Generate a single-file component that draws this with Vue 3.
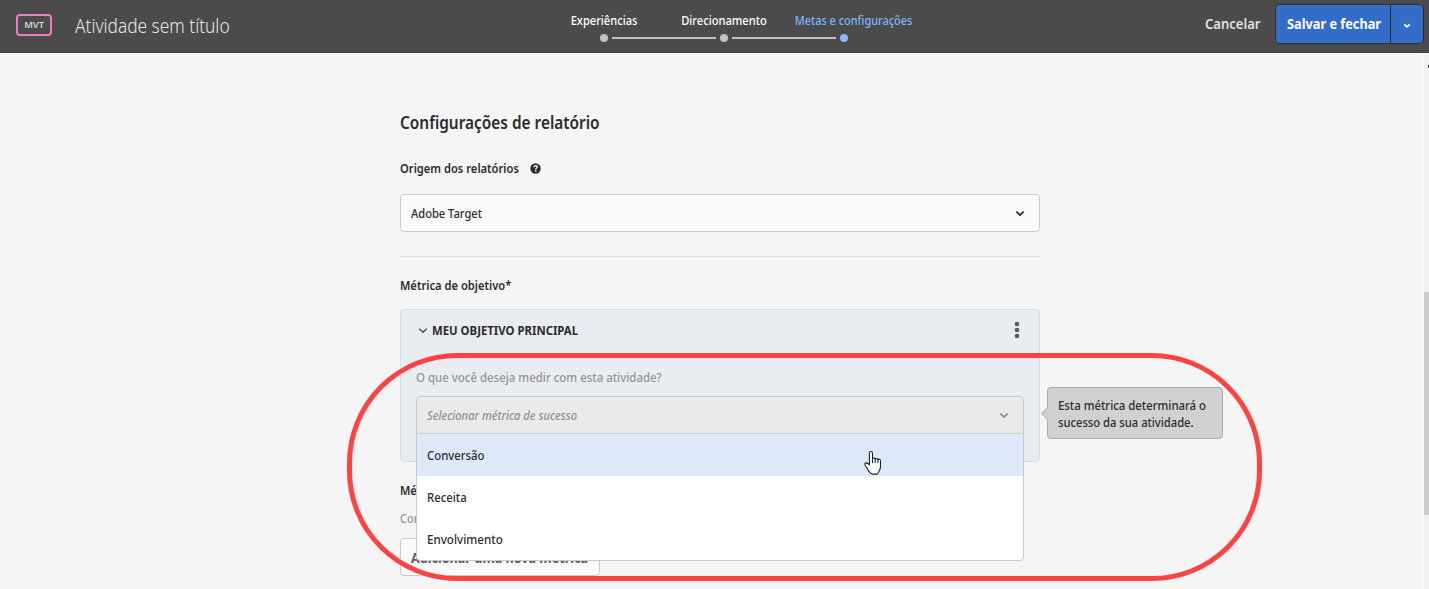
<script setup>
import { ref } from 'vue'

const steps = [
  { label: 'Experiências', key: 'exp' },
  { label: 'Direcionamento', key: 'dir' },
  { label: 'Metas e configurações', key: 'goals' },
]
const active = ref('goals')
const metrics = [
  { label: 'Conversão', key: 'conv' },
  { label: 'Receita', key: 'rec' },
  { label: 'Envolvimento', key: 'env' },
]
const hovered = ref('conv')
</script>

<template>
  <div class="page">
    <header class="topbar">
      <div class="left">
        <span class="badge"><span class="t">MVT</span></span>
        <h1 class="t">Atividade sem título</h1>
      </div>
      <ol class="steps">
        <li v-for="s in steps" :key="s.key" :class="['step', s.key, { active: s.key === active }]">
          <span class="t">{{ s.label }}</span>
          <i class="dot"></i>
        </li>
      </ol>
      <div class="actions">
        <button class="cancel"><span class="t">Cancelar</span></button>
        <div class="split">
          <button class="save"><span class="t">Salvar e fechar</span></button>
          <button class="more" aria-label="Mais">
            <svg width="8" height="6" viewBox="0 0 8 6"><path class="line" d="M1.2 1.4 4 3.9 6.8 1.4" /></svg>
          </button>
        </div>
      </div>
    </header>

    <main class="content">
      <h2><span class="t">Configurações de relatório</span></h2>
      <div class="label source">
        <span class="t">Origem dos relatórios</span>
        <svg class="help" width="11" height="11" viewBox="0 0 11 11">
          <circle cx="5.5" cy="5.5" r="5.2" fill="#2c2c2c" />
          <path d="M3.9 4.2C4 3.2 4.7 2.7 5.6 2.7c1 0 1.7.5 1.7 1.3 0 1.1-1.6 1.1-1.6 2.4" fill="none" stroke="#fff" stroke-width="1.25" />
          <rect x="5" y="7.3" width="1.4" height="1.4" fill="#fff" />
        </svg>
      </div>
      <div class="select">
        <span class="t target">Adobe Target</span>
        <svg width="10" height="7" viewBox="0 0 10 7"><path class="line" d="M1.3 1.6 5 5 8.7 1.6" /></svg>
      </div>
      <hr />
      <div class="label goal"><span class="t">Métrica de objetivo*</span></div>

      <section class="panel">
        <div class="panel-head">
          <svg width="10" height="7" viewBox="0 0 10 7"><path class="line thin" d="M1.2 1.8 5 5.2 8.8 1.8" /></svg>
          <span class="t">MEU OBJETIVO PRINCIPAL</span>
          <svg class="dots" width="6" height="18" viewBox="0 0 6 18">
            <circle cx="3" cy="3" r="2.3" /><circle cx="3" cy="9" r="2.3" /><circle cx="3" cy="15" r="2.3" />
          </svg>
        </div>
        <p class="question"><span class="t">O que você deseja medir com esta atividade?</span></p>
        <div class="picker">
          <div class="select open">
            <span class="t placeholder">Selecionar métrica de sucesso</span>
            <svg width="10" height="7" viewBox="0 0 10 7"><path class="line" d="M1.3 1.6 5 5 8.7 1.6" /></svg>
          </div>
          <ul class="menu">
            <li v-for="m in metrics" :key="m.key" :class="[m.key, { hover: m.key === hovered }]">
              <span class="t">{{ m.label }}</span>
            </li>
          </ul>
        </div>
        <aside class="tip">
          <span class="t first">Esta métrica determinará o</span>
          <span class="t second">sucesso da sua atividade.</span>
        </aside>
      </section>

      <div class="label extra"><span class="t">Mé</span></div>
      <p class="hint"><span class="t">Con</span></p>
      <button class="add"><span class="t">Adicionar uma nova métrica</span></button>
    </main>

    <div class="scroll"><i class="thumb"></i><i class="mark"></i></div>
    <div class="highlight"></div>
    <svg class="cursor" width="20" height="26" viewBox="0 0 20 26">
      <path d="M6.4 14.8V3.2c0-2.2 3.1-2.2 3.1 0v5.6c.3-1.2 2.5-1 2.7.3.6-1 2.5-.7 2.7.5.7-.8 2.6-.5 2.6 1.1v5.7c0 2.2-.8 3.4-1.4 4.6-.5 1-.8 2.9-2.2 3.1H9.7c-1.8 0-2.7-1.3-3.5-2.5L2.4 15.7c-.9-1.5-.5-2.8.8-2.8.9 0 2.4.9 3.2 1.9Z" fill="#fff" stroke="#1c2030" stroke-width="1.1" stroke-linejoin="round" />
      <path d="M9.5 8.4v4.2M12.2 9v3.6M14.9 9.6v3" fill="none" stroke="#1c2030" stroke-width="1.1" stroke-linecap="round" />
    </svg>
  </div>
</template>

<style>
html, body { margin: 0; overflow: hidden; }
</style>

<style scoped>
* { box-sizing: border-box; }
.page {
  position: relative;
  width: 1429px;
  height: 589px;
  overflow: hidden;
  background: #f5f5f5;
  color: #2c2c2c;
  font: 500 13px/20px "Noto Sans", "Open Sans", sans-serif;
}
h1, h2, p, ol, ul { margin: 0; padding: 0; list-style: none; }
button { border: 0; background: none; padding: 0; font: inherit; color: inherit; }
.line { fill: none; stroke: currentColor; stroke-width: 1.7; }
.thin { stroke-width: 1.4; }

/* Narrow letterforms: every label is condensed horizontally */
.t { display: inline-block; white-space: nowrap; transform: scaleX(.855); transform-origin: 0 50%; }

.topbar {
  display: grid;
  grid-template-columns: 544px 360px 1fr;
  height: 53px;
  background: #4b4b4b;
  border-bottom: 1px solid #444;
}
.left { display: flex; align-items: flex-start; padding: 14px 0 0 16px; }
.badge {
  display: flex; align-items: center; justify-content: center;
  width: 36px; height: 22px; border: 2px solid #ea7cc5; border-radius: 4px;
  color: #d9d9d9; font-size: 9.5px; font-weight: 600;
}
.badge .t { transform: scaleX(.98); transform-origin: 50% 50%; }
h1 { margin-left: 23px; color: #e8e8e8; font-size: 20px; font-weight: 300; line-height: 24px; }
h1.t { transform: scaleX(.865); }
.steps { display: grid; grid-template-columns: repeat(3, 120px); }
.step { position: relative; display: flex; flex-direction: column; align-items: center; padding-top: 10px; color: #fff; }
.step .t { transform-origin: 50% 50%; }
.step.goals .t { transform: translateX(9.5px) scaleX(.84); }
.step.active { color: #7db4fb; }
.dot { width: 8px; height: 8px; margin-top: 4px; border-radius: 50%; background: #c2c2c2; }
.active .dot { background: #86bcff; }
.step + .step::before { content: ""; position: absolute; left: -52px; top: 37px; width: 104px; height: 2px; background: #c2c2c2; }
.actions { display: flex; justify-content: flex-end; align-items: flex-start; padding: 4px 5px 0 0; font-size: 15px; }
.cancel { width: 64px; height: 38px; margin-right: 6px; text-align: left; color: #e0e0e0; font-weight: 600; }
.cancel .t { transform: scaleX(.87); }
.split { display: flex; width: 149px; height: 40px; border: 1px solid #2e2e2e; border-radius: 4px; background: #326ec8; color: #fff; }
.save { width: 115px; padding: 0 0 2px 11px; text-align: left; border-right: 1px solid #2e2e2e; font-weight: 700; white-space: nowrap; overflow: hidden; }
.save .t { transform: scaleX(.85); }
.more { display: flex; align-items: center; justify-content: center; flex: 1; padding-top: 3px; }

.content { width: 640px; margin-left: 400px; padding-top: 56px; }
h2 { height: 24px; font-size: 17.5px; line-height: 26px; font-weight: 600; }
h2 .t { transform: scaleX(.88); margin-left: -.5px; }
.label { height: 20px; font-weight: 600; color: #2c2c2c; }
.label .t { transform: scaleX(.859); margin-left: -.5px; }
.source { display: flex; align-items: center; margin: 25px 0 16px; }
.help { margin-left: -8px; }
.select {
  display: flex; align-items: center; justify-content: space-between;
  height: 38px; padding: 0 14.5px 0 9.5px; border: 1px solid #cacaca; border-radius: 4px; background: #fafafa;
}
hr { height: 1px; margin: 24px 0 18px; border: 0; background: #e1e1e1; }
.panel {
  position: relative; height: 153px; margin-top: 14px; padding: 10px 15px 0;
  border: 1px solid #d6deec; border-radius: 4px; background: #e9ecf1;
}
.panel-head { display: flex; align-items: center; height: 20px; font-weight: 700; color: #2c2c2c; padding-left: 1.5px; }
.panel-head .t { margin-left: 4px; transform: scaleX(.874); }
.panel-head svg { color: #505050; }
.dots { margin-left: auto; margin-right: 4.5px; fill: #5a5a5a; }
.question { height: 20px; margin: 27px 0 9px; color: #959595; }
.question .t { transform: scaleX(.88); margin-left: -.5px; }
.picker { position: relative; z-index: 2; }
.open { background: #eaeaea; color: #909090; border-radius: 4px 4px 0 0; }
.placeholder { font-style: italic; }
.menu {
  position: absolute; left: 0; right: 0; top: 37px; height: 128px;
  border: 1px solid #cacaca; border-radius: 0 0 4px 4px; background: #fff; overflow: hidden;
}
.menu li { height: 42px; padding: 11px 9.5px; }
.menu .hover { background: #dee8f8; }
.menu .t { transform: scaleX(.873); }
.menu .env .t { transform: scaleX(.893); }
.tip {
  position: absolute; left: 646px; top: 77px; width: 176px; height: 52px; padding: 9px 9.5px;
  display: flex; flex-direction: column; line-height: 17px;
  border: 1px solid #ababab; border-radius: 4px; background: #d1d1d1;
}
.tip::before {
  content: ""; position: absolute; left: -5px; top: 21px; width: 8px; height: 8px;
  border: solid #b4b4b4; border-width: 0 0 1px 1px; background: #d1d1d1; transform: rotate(45deg);
}
.tip .first { transform: scaleX(.875); }
.tip .second { transform: scaleX(.862); }
.extra { margin-top: 18px; }
.hint { height: 20px; margin-top: 8px; color: #959595; }
.hint .t { margin-left: -.5px; }
.add {
  display: block; width: 200px; height: 38px; margin-top: 10px; padding: 2px 0 0 10px; text-align: left;
  border: 1px solid #cacaca; border-radius: 4px; background: #fafafa; color: #5a5a5a; font-size: 14px; font-weight: 700;
}
.add .t { transform: scaleX(.9); }

.scroll { position: absolute; right: 0; top: 55px; bottom: 0; width: 6px; border-left: 1px solid #fff; background: #f0f0f0; }
.thumb { position: absolute; left: 0; right: 0; top: 237px; height: 223px; background: #cdcdcd; }
.mark { position: absolute; right: 0; top: 10px; width: 1px; height: 3px; background: #505050; }
.highlight { position: absolute; z-index: 3; left: 347px; top: 353px; width: 915px; height: 228px; border: 5px solid #ff4242; border-radius: 110px; }
.cursor { position: absolute; z-index: 4; left: 863px; top: 450px; }
</style>
